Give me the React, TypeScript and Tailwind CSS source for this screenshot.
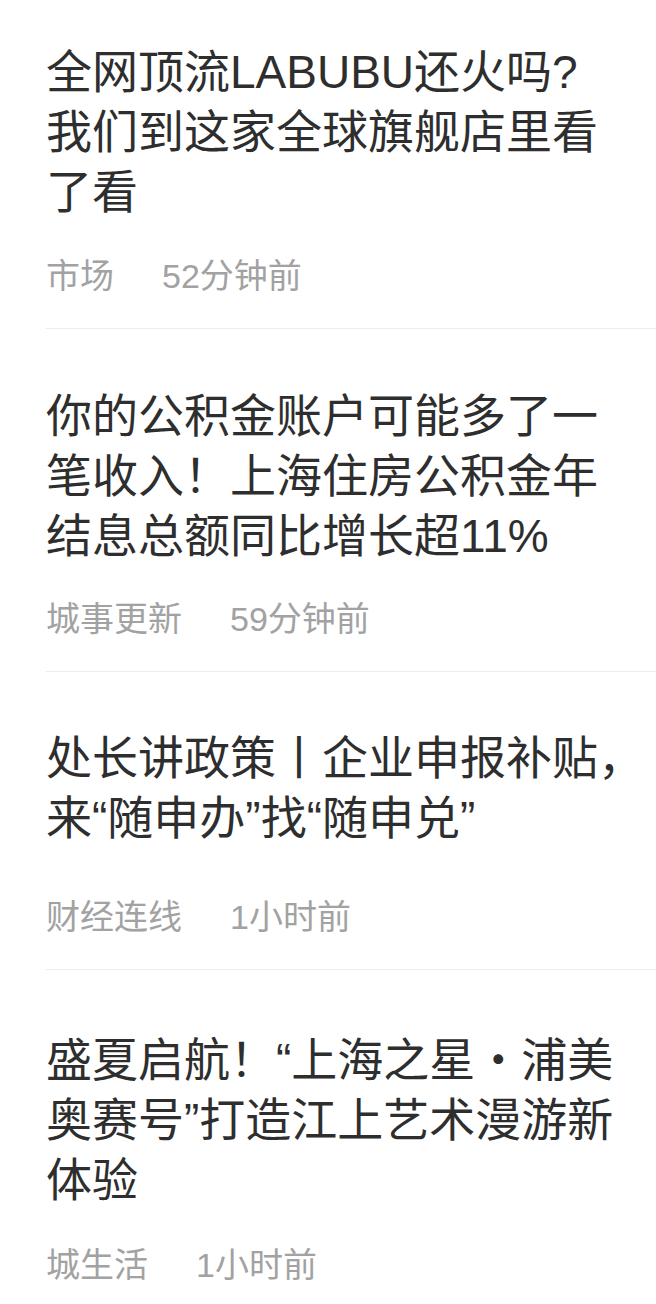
const news = [
  {
    lines: [["全网顶流LABUBU还火吗?"], ["我们到这家全球旗舰店里看"], ["了看"]],
    tag: "市场",
    time: "52分钟前",
    pad: "pt-[42px]",
    metaGap: "mt-[34px]",
  },
  {
    lines: [["你的公积金账户可能多了一"], ["笔收入！上海住房公积金年"], ["结息总额同比增长超11%"]],
    tag: "城事更新",
    time: "59分钟前",
    pad: "pt-[57px]",
    metaGap: "mt-[33px]",
  },
  {
    lines: [["处长讲政策丨企业申报补贴，"], ["来“随申办”找“随申兑”"]],
    tag: "财经连线",
    time: "1小时前",
    pad: "pt-14",
    metaGap: "mt-[49px]",
  },
  {
    // the middle dot is set in the CJK face so it keeps its full width
    lines: [["盛夏启航！“上海之星", "·", "浦美"], ["奥赛号”打造江上艺术漫游新"], ["体验"]],
    tag: "城生活",
    time: "1小时前",
    pad: "pt-14",
    metaGap: "mt-[35px]",
  },
];

export default function App() {
  return (
    <div
      className="min-h-screen w-full bg-white overflow-hidden"
      style={{ fontFamily: '"Liberation Sans", "Noto Sans CJK SC", sans-serif' }}
    >
      <ul className="ml-[46px]">
        {news.map((item, i) => (
          <li
            key={i}
            className={`${item.pad} pb-8 ${i < news.length - 1 ? "border-b border-[#ececec]" : ""}`}
          >
            <h3 className="text-[46px] leading-[60px] font-normal text-[#2e2e2e] whitespace-nowrap">
              {item.lines.map((parts, j) => (
                <span key={j} className="block">
                  {parts.map((p, k) =>
                    p === "·" ? (
                      <span key={k} className="font-['Noto_Sans_CJK_SC']">
                        {p}
                      </span>
                    ) : (
                      <span key={k}>{p}</span>
                    )
                  )}
                </span>
              ))}
            </h3>
            <div className={`${item.metaGap} flex gap-[48px] text-[34px] leading-[40px] text-[#a2a2a2]`}>
              <span>{item.tag}</span>
              <span>{item.time}</span>
            </div>
          </li>
        ))}
      </ul>
    </div>
  );
}
